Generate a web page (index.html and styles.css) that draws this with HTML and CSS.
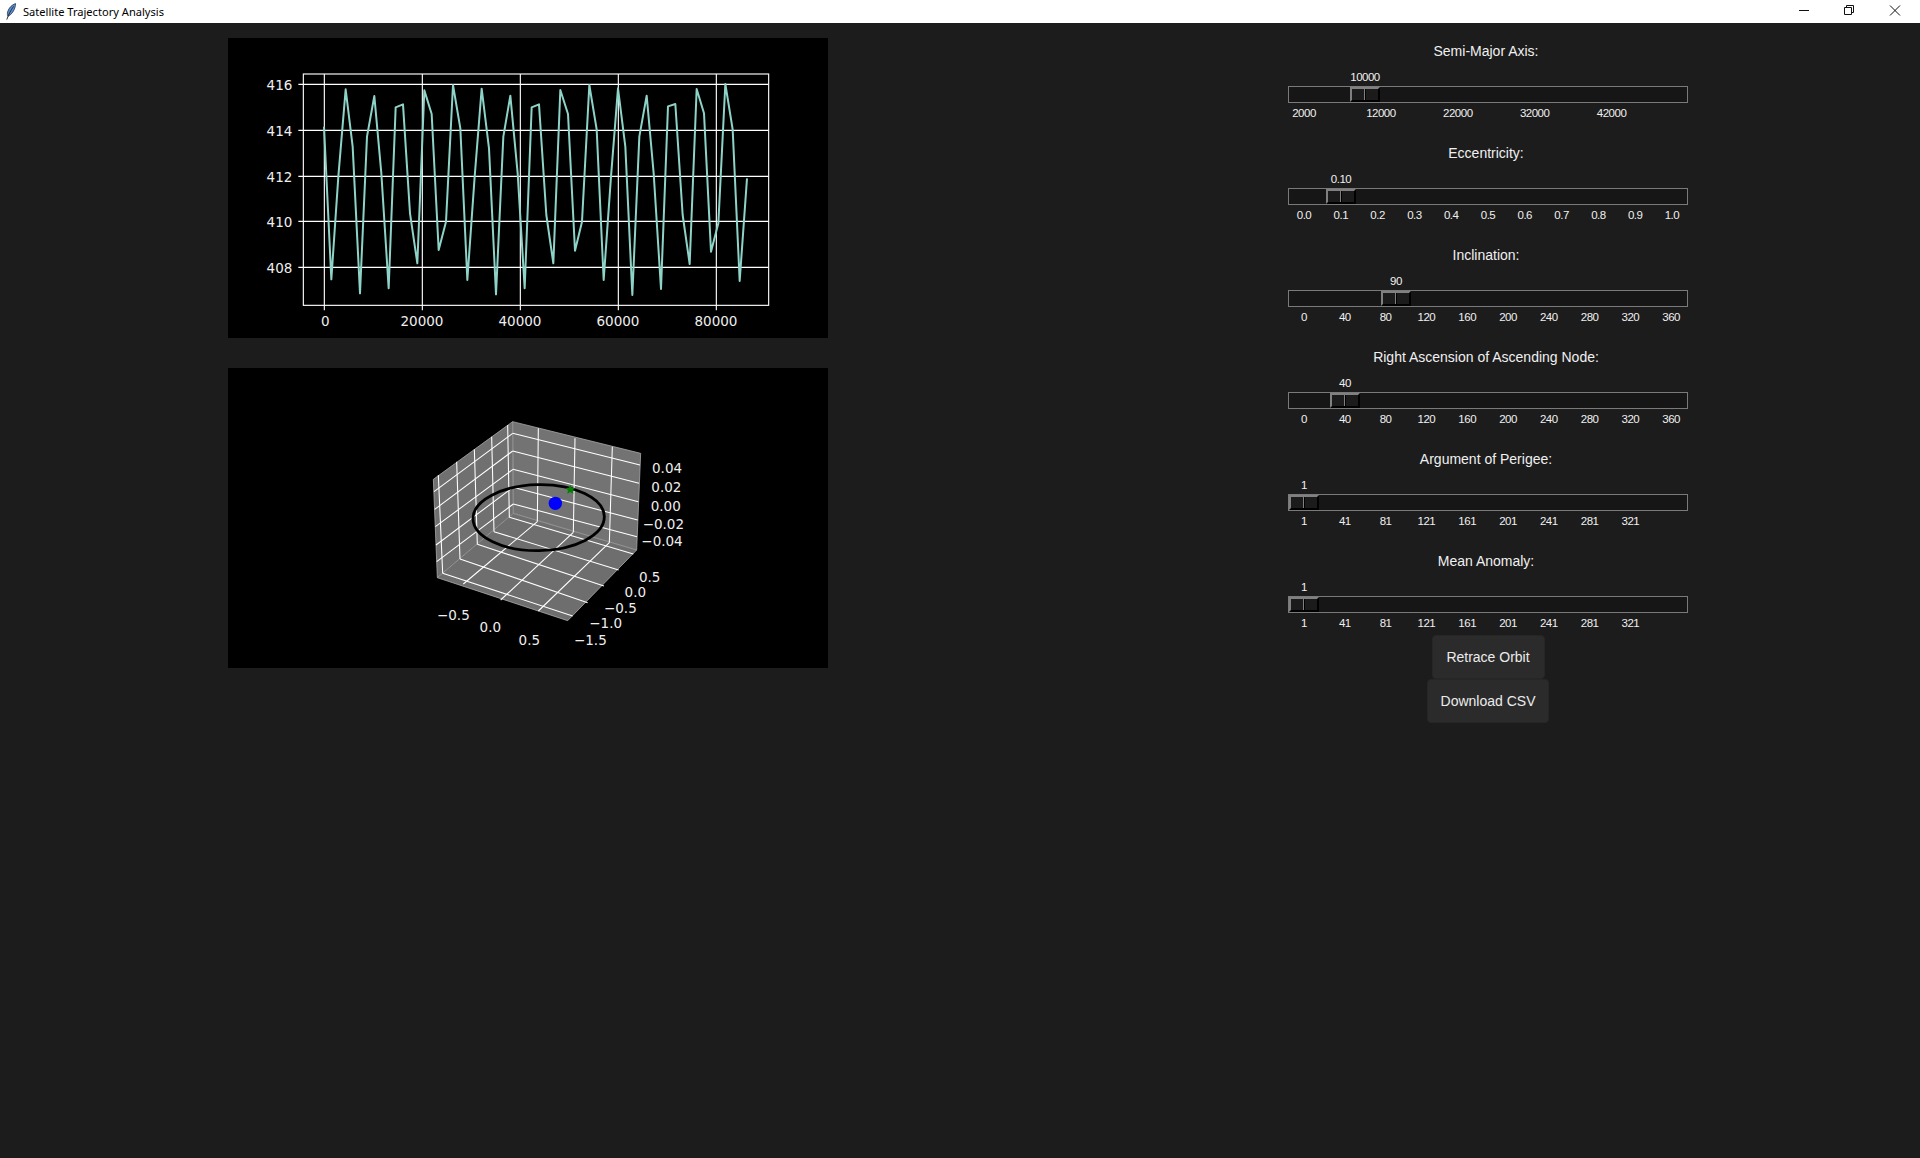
FILE: index.html
```html
<!DOCTYPE html>
<html lang="en">
<head>
<meta charset="utf-8">
<title>Satellite Trajectory Analysis</title>
<link rel="stylesheet" href="styles.css">
</head>
<body>
<header class="titlebar">
  <svg class="app-icon" viewBox="0 0 12 18" aria-hidden="true">
    <path class="feather" d="M10.6 .6C7 1.6 3.6 5 2.6 9c-.4 1.7-.2 3.2.4 4.3C6.4 11.800 9 7.800 10 4.400c.3-1.300.6-2.700.6-3.800z"/>
    <path class="quill" d="M8.600 3.400C6 7 3.600 11 1.800 16.600"/>
  </svg>
  <span class="window-title">Satellite Trajectory Analysis</span>
  <div class="window-controls">
    <svg class="win-btn" viewBox="0 0 46 23" aria-hidden="true"><path d="M19 10.500h10"/></svg>
    <svg class="win-btn" viewBox="0 0 46 23" aria-hidden="true"><path d="M18.500 7.500h7v7h-7zM20.500 7.500v-2h7v7h-2"/></svg>
    <svg class="win-btn" viewBox="0 0 46 23" aria-hidden="true"><path d="M18 5.500l10 10M28 5.500l-10 10"/></svg>
  </div>
</header>

<main class="main">
  <section class="charts">
    <svg class="figure" viewBox="24 24 1800 900" role="img" aria-label="Altitude over time">
      <g class="grid">
        <path d="M313 132V826M607 132V826M901 132V826M1195 132V826M1489 132V826"/>
        <path d="M250 163H1646M250 301H1646M250 439H1646M250 574H1646M250 712H1646"/>
        <path d="M313 826v15M607 826v15M901 826v15M1195 826v15M1489 826v15M250 163h-15M250 301h-15M250 439h-15M250 574h-15M250 712h-15"/>
        <rect x="250" y="132" width="1396" height="694"/>
      </g>
      <polyline class="trace" points="312,290 334,748 355,440 377,178 398,350 420,790 441,320 463,198 484,430 506,775 527,232 549,223 570,550 592,700 613,181 635,252 656,660 678,575 699,165 721,295 742,750 764,440 785,176 807,355 828,793 850,320 871,197 893,430 914,775 935,232 957,223 979,555 1000,700 1021,180 1044,252 1065,662 1086,575 1108,165 1130,298 1151,750 1173,440 1194,175 1216,350 1237,795 1258,320 1280,197 1301,430 1323,777 1344,229 1366,222 1388,555 1409,702 1430,177 1452,250 1473,665 1495,580 1516,162 1538,298 1559,753 1581,445"/>
      <g class="tick-text">
        <text class="end" x="217" y="179">416</text>
        <text class="end" x="217" y="317">414</text>
        <text class="end" x="217" y="455">412</text>
        <text class="end" x="217" y="590">410</text>
        <text class="end" x="217" y="728">408</text>
        <text class="mid" x="316" y="888">0</text>
        <text class="mid" x="606" y="888">20000</text>
        <text class="mid" x="900" y="888">40000</text>
        <text class="mid" x="1194" y="888">60000</text>
        <text class="mid" x="1488" y="888">80000</text>
      </g>
    </svg>

    <svg class="figure" viewBox="-576 -126 1800 900" role="img" aria-label="3D orbit">
      <polygon class="pane-left" points="40,208 278,35 280,310 52,503"/>
      <polygon class="pane-back" points="278,35 662,130 650,420 280,310"/>
      <polygon class="pane-floor" points="52,503 280,310 650,420 443,632"/>
      <g class="edges">
        <path d="M40 208L278 35L662 130M52 503L280 310L650 420M278 35L280 310M40 208L52 503M662 130L650 420M52 503L443 632L650 420"/>
      </g>
      <g class="grid3d">
        <path d="M355 55L352 335M465 85L460 367M577 110L568 398"/>
        <path d="M278 70L660 165M278 123L657 220M279 178L655 275M279 232L653 330M280 282L651 380"/>
        <path d="M55 195L68 490M110 155L120 447M163 118L172 403M215 80L222 365M263 45L268 322"/>
        <path d="M278 70L42 245M278 123L44 298M279 178L46 350M279 232L48 405M280 282L50 455"/>
        <path d="M268 322L640 432M222 365L596 480M172 403L552 528M120 447L503 578M68 490L458 618"/>
        <path d="M352 335L130 522M460 367L242 570M568 398L355 603"/>
      </g>
      <ellipse class="orbit" cx="356" cy="323" rx="197" ry="99" transform="rotate(-1 356 323)"/>
      <circle class="earth" cx="406" cy="280" r="20"/>
      <polygon class="satellite" points="451,224 455,233 465,234 458,241 460,251 451,246 442,251 444,241 437,234 447,233"/>
      <g class="tick-text">
        <text x="696" y="190">0.04</text>
        <text x="694" y="247">0.02</text>
        <text x="692" y="303">0.00</text>
        <text x="668" y="357">−0.02</text>
        <text x="664" y="408">−0.04</text>
        <text class="mid" x="689" y="516">0.5</text>
        <text class="mid" x="646" y="562">0.0</text>
        <text class="mid" x="601" y="608">−0.5</text>
        <text class="mid" x="557" y="655">−1.0</text>
        <text class="mid" x="511" y="705">−1.5</text>
        <text class="mid" x="100" y="630">−0.5</text>
        <text class="mid" x="211" y="667">0.0</text>
        <text class="mid" x="328" y="705">0.5</text>
      </g>
    </svg>
  </section>

  <section class="controls">
    <div class="control">
      <div class="control-label">Semi-Major Axis:</div>
      <div class="scale" style="--pos:61px">
        <div class="scale-value">10000</div>
        <div class="trough"><div class="thumb"></div></div>
      </div>
      <div class="ticks ticks-sma"><span>2000</span><span>12000</span><span>22000</span><span>32000</span><span>42000</span></div>
    </div>
    <div class="control">
      <div class="control-label">Eccentricity:</div>
      <div class="scale" style="--pos:37px">
        <div class="scale-value">0.10</div>
        <div class="trough"><div class="thumb"></div></div>
      </div>
      <div class="ticks ticks-ecc"><span>0.0</span><span>0.1</span><span>0.2</span><span>0.3</span><span>0.4</span><span>0.5</span><span>0.6</span><span>0.7</span><span>0.8</span><span>0.9</span><span>1.0</span></div>
    </div>
    <div class="control">
      <div class="control-label">Inclination:</div>
      <div class="scale" style="--pos:92px">
        <div class="scale-value">90</div>
        <div class="trough"><div class="thumb"></div></div>
      </div>
      <div class="ticks ticks-deg"><span>0</span><span>40</span><span>80</span><span>120</span><span>160</span><span>200</span><span>240</span><span>280</span><span>320</span><span>360</span></div>
    </div>
    <div class="control">
      <div class="control-label">Right Ascension of Ascending Node:</div>
      <div class="scale" style="--pos:41px">
        <div class="scale-value">40</div>
        <div class="trough"><div class="thumb"></div></div>
      </div>
      <div class="ticks ticks-deg"><span>0</span><span>40</span><span>80</span><span>120</span><span>160</span><span>200</span><span>240</span><span>280</span><span>320</span><span>360</span></div>
    </div>
    <div class="control">
      <div class="control-label">Argument of Perigee:</div>
      <div class="scale" style="--pos:0px">
        <div class="scale-value">1</div>
        <div class="trough"><div class="thumb"></div></div>
      </div>
      <div class="ticks ticks-deg"><span>1</span><span>41</span><span>81</span><span>121</span><span>161</span><span>201</span><span>241</span><span>281</span><span>321</span></div>
    </div>
    <div class="control">
      <div class="control-label">Mean Anomaly:</div>
      <div class="scale" style="--pos:0px">
        <div class="scale-value">1</div>
        <div class="trough"><div class="thumb"></div></div>
      </div>
      <div class="ticks ticks-deg"><span>1</span><span>41</span><span>81</span><span>121</span><span>161</span><span>201</span><span>241</span><span>281</span><span>321</span></div>
    </div>
    <div class="actions">
      <button class="action action-retrace" type="button">Retrace Orbit</button>
      <button class="action action-download" type="button">Download CSV</button>
    </div>
  </section>
</main>
</body>
</html>
```
FILE: styles.css
```css
* { box-sizing: border-box; }

html, body {
  margin: 0;
  height: 100%;
}

body {
  height: 1158px;
  overflow: hidden;
  background: #1c1c1c;
  color: #f0f0f0;
  font-family: "Liberation Sans", Arial, sans-serif;
}

/* Title bar */
.titlebar {
  display: flex;
  align-items: center;
  height: 23px;
  padding-left: 5px;
  background: #fff;
  color: #000;
}

.app-icon {
  width: 12px;
  height: 18px;
  margin-right: 6px;
}

.feather { fill: #5f8fd0; stroke: #22364f; stroke-width: .8; }
.quill { fill: none; stroke: #16222f; stroke-width: .9; }

.window-title {
  font-family: "Noto Sans", "Open Sans", sans-serif;
  font-size: 11.1px;
  line-height: 23px;
}

.window-controls {
  display: flex;
  margin-left: auto;
  margin-right: 2px;
}

.win-btn {
  width: 46px;
  height: 23px;
  fill: none;
  stroke: #111;
  stroke-width: 1;
}

/* Page layout */
.main {
  display: flex;
  gap: 460px;
  padding: 15px 0 0 228px;
}

.charts {
  display: flex;
  flex-direction: column;
  gap: 30px;
  width: 600px;
}

.figure {
  display: block;
  width: 600px;
  height: 300px;
  background: #000;
}

/* Matplotlib drawing */
.grid path, .grid rect {
  fill: none;
  stroke: #fff;
  stroke-width: 3.4;
}

.trace {
  fill: none;
  stroke: #8dd3c7;
  stroke-width: 6;
  stroke-linejoin: round;
}

.tick-text text {
  fill: #eeeeee;
  font-family: "DejaVu Sans", sans-serif;
  font-size: 40.5px;
}

.tick-text .end { text-anchor: end; }
.tick-text .mid { text-anchor: middle; }

.pane-left { fill: #707070; }
.pane-back { fill: #737373; }
.pane-floor { fill: #6e6e6e; }

.edges path {
  fill: none;
  stroke: #a8a8a8;
  stroke-width: 2.4;
}

.grid3d path {
  fill: none;
  stroke: #fff;
  stroke-width: 3.2;
}

.orbit {
  fill: none;
  stroke: #000;
  stroke-width: 8.5;
}

.earth { fill: #0000ff; }
.satellite { fill: #008000; }

/* Slider column */
.controls {
  width: 400px;
  padding-top: 5px;
}

.control + .control {
  margin-top: 24px;
}

.control-label {
  height: 16px;
  padding-right: 4px;
  font-size: 14px;
  line-height: 16px;
  text-align: center;
}

.scale {
  margin-top: 11px;
}

.scale-value {
  display: flex;
  justify-content: center;
  width: 30px;
  height: 14px;
  margin-left: calc(var(--pos) + 1px);
  font-size: 11.5px;
  line-height: 14px;
  letter-spacing: -.5px;
  white-space: nowrap;
}

.trough {
  height: 17px;
  margin-top: 2px;
  border: 1px solid #7a7a7a;
  background: #161616;
}

.thumb {
  position: relative;
  width: 30px;
  height: 15px;
  margin-left: var(--pos);
  background: #1b1b1b;
  border-style: solid;
  border-width: 2px;
  border-color: #808080 #000 #000 #808080;
}

.thumb::after {
  content: "";
  position: absolute;
  top: 0;
  bottom: 0;
  left: 12px;
  width: 2px;
  background: linear-gradient(90deg, #808080 50%, #000 50%);
}

.ticks {
  display: flex;
  height: 16px;
  margin-top: 2px;
  margin-left: calc(16px - var(--pitch) / 2);
  font-size: 11.5px;
  line-height: 16px;
  letter-spacing: -.5px;
}

.ticks span {
  flex: none;
  width: var(--pitch);
  text-align: center;
}

.ticks-sma { --pitch: 76.9px; }
.ticks-ecc { --pitch: 36.8px; }
.ticks-deg { --pitch: 40.8px; }

/* Buttons */
.actions {
  display: flex;
  flex-direction: column;
  align-items: center;
  margin-top: 4px;
}

.action {
  height: 44px;
  padding: 0;
  border: 1px solid #262626;
  border-radius: 4px;
  background: #2b2b2b;
  color: #ececec;
  font-family: "Liberation Sans", Arial, sans-serif;
  font-size: 14px;
}

.action-retrace { width: 113px; }
.action-download { width: 122px; }
```
